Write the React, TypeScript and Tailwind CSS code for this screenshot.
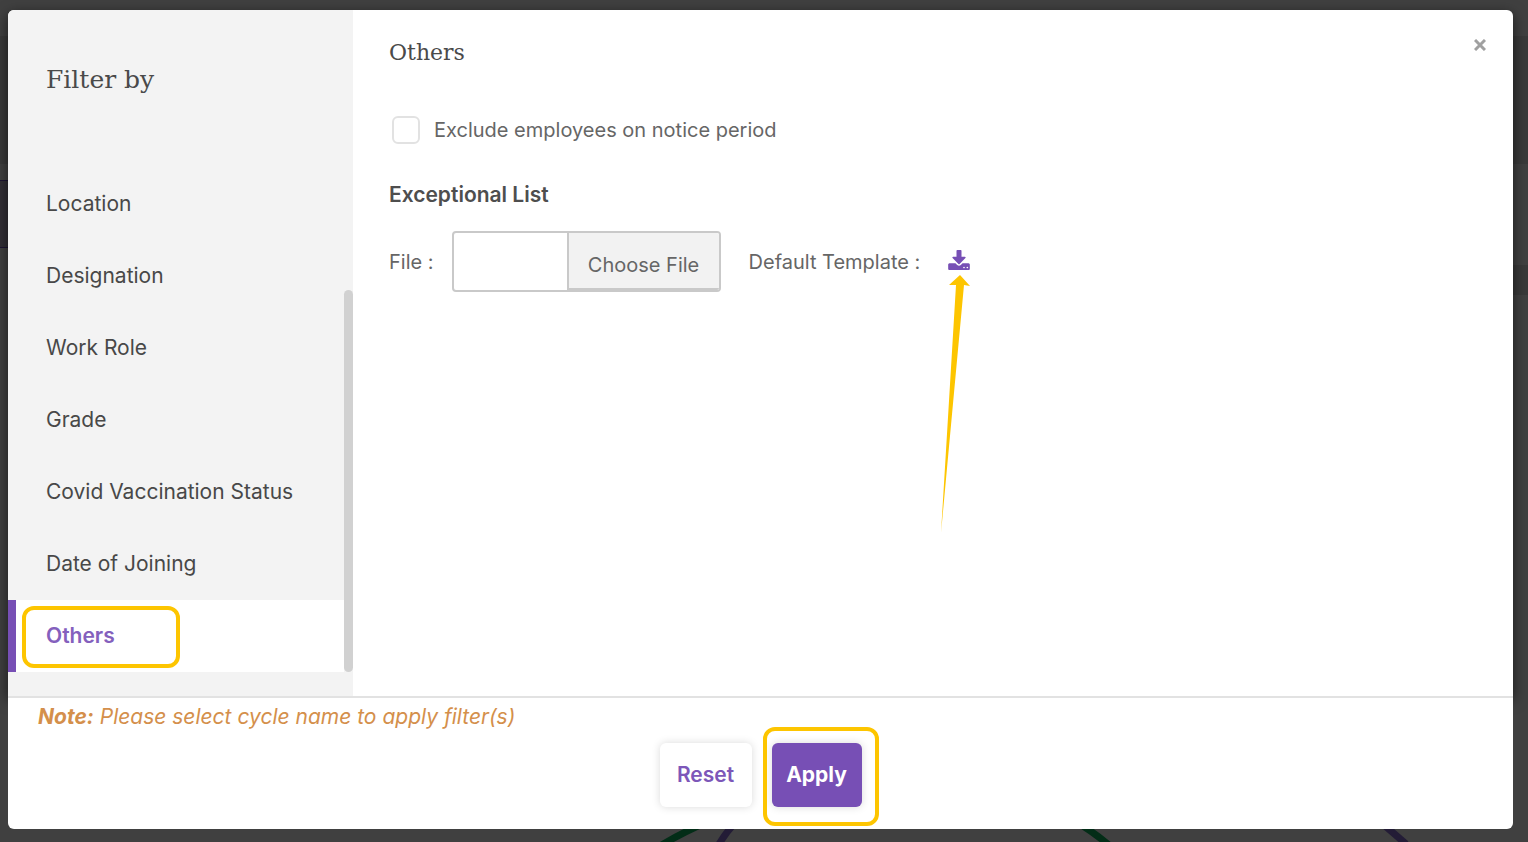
import { useState } from "react";

const filters = [
  "Location",
  "Designation",
  "Work Role",
  "Grade",
  "Covid Vaccination Status",
  "Date of Joining",
  "Others",
];

function DownloadIcon() {
  return (
    <svg viewBox="0 0 1664 1536" className="w-[22px] h-5" fill="currentColor">
      <path d="M1280 1344q0-26-19-45t-45-19-45 19-19 45 19 45 45 19 45-19 19-45zm256 0q0-26-19-45t-45-19-45 19-19 45 19 45 45 19 45-19 19-45zm128-224v320q0 40-28 68t-68 28h-1472q-40 0-68-28t-28-68v-320q0-40 28-68t68-28h465l135 136q58 56 136 56t136-56l136-136h464q40 0 68 28t28 68zm-325-569q17 41-14 70l-448 448q-18 19-45 19t-45-19l-448-448q-31-29-14-70 17-39 59-39h256v-448q0-26 19-45t45-19h256q26 0 45 19t19 45v448h256q42 0 59 39z" />
    </svg>
  );
}

// dimmed page that sits behind the dialog
function Backdrop() {
  return (
    <div className="absolute inset-0 overflow-hidden" aria-hidden="true">
      <div className="absolute inset-x-0 top-9 h-32 bg-[#3a3a3a]" />
      <div className="absolute left-0 top-[180px] w-24 h-[68px] bg-[#322f36] border-y border-[#1d1433]" />
      <div className="absolute right-0 top-[265px] w-24 h-[30px] bg-[#393939]" />
      <svg
        className="absolute left-0 bottom-0 w-full h-4"
        viewBox="0 0 1528 16"
        preserveAspectRatio="none"
        fill="none"
        strokeWidth="7"
      >
        <path d="M660 20Q678 9 702 -2" stroke="#032d17" />
        <path d="M718 20Q724 9 734 -2" stroke="#231c36" />
        <path d="M1080 -2Q1096 8 1110 20" stroke="#032d17" />
        <path d="M1383 -2L1406 18" stroke="#231c36" />
      </svg>
    </div>
  );
}

export default function App() {
  const [active, setActive] = useState("Others");

  return (
    <div className="relative min-h-screen flex flex-col bg-[#404040] pt-[10px] pb-[13px] pl-2 pr-[15px] font-['Inter','Liberation_Sans',sans-serif] text-[20px] leading-6 text-[#666666]">
      <Backdrop />
      <div
        role="dialog"
        aria-labelledby="filter-title"
        className="relative flex-1 flex flex-col"
      >
        <div className="flex-1 flex bg-white rounded-t-md shadow-[0_4px_14px_rgba(0,0,0,0.6)]">
          <aside className="w-[345px] shrink-0 bg-[#f3f3f3] rounded-tl-md flex flex-col pb-6 text-[21px]">
            <h2
              id="filter-title"
              className="h-[158px] pt-[54px] pl-[38px] font-['DejaVu_Serif',serif] text-[25px] leading-8 text-[#4a4a4a]"
            >
              Filter by
            </h2>
            <div className="flex">
              <nav className="flex-1 flex flex-col">
                {filters.map((name) => (
                  <button
                    key={name}
                    type="button"
                    onClick={() => setActive(name)}
                    className={
                      name === active
                        ? "relative h-[72px] pl-[30px] border-l-8 border-[#774fb5] bg-white text-left font-semibold text-[#8460bd]"
                        : "h-[72px] pl-[38px] text-left text-[#484848]"
                    }
                  >
                    {name}
                    {name === "Others" && (
                      <span className="absolute left-[6px] top-[6px] w-[158px] h-[62px] rounded-[12px] border-4 border-[#fdc500]" />
                    )}
                  </button>
                ))}
              </nav>
              <div className="w-[9px] flex flex-col justify-end">
                <div className="h-[382px] rounded-full bg-[#d1d1d1]" />
              </div>
            </div>
          </aside>

          <section className="flex-1 pl-9 pr-6 pt-[27px]">
            <div className="flex justify-between items-start">
              <h3 className="font-['DejaVu_Serif',serif] text-[22px] leading-8 text-[#4a4a4a]">
                Others
              </h3>
              <button type="button" aria-label="Close" className="p-[3px] pt-0.5">
                <svg
                  viewBox="0 0 12 12"
                  className="size-3"
                  fill="none"
                  stroke="#a0a0a0"
                  strokeWidth="3"
                >
                  <path d="M1 1L11 11M11 1L1 11" />
                </svg>
              </button>
            </div>

            <label className="mt-[47px] flex items-center gap-[14px] pl-[3px] h-7">
              <input
                type="checkbox"
                className="appearance-none size-7 rounded-md border-2 border-[#e2e2e2] bg-white checked:bg-[#774fb5]"
              />
              Exclude employees on notice period
            </label>

            <h4 className="mt-[39px] text-[21px] font-semibold text-[#4e4e4e]">
              Exceptional List
            </h4>

            <div className="mt-6 flex items-center">
              <label htmlFor="list-file">File :</label>
              <div className="relative ml-[18px] flex w-[269px] h-[61px] rounded border-2 border-[#c9c9c9] bg-white overflow-hidden">
                <div className="flex-1" />
                <label
                  htmlFor="list-file"
                  className="w-[152px] pt-2 border-l-2 border-b-2 border-[#c9c9c9] bg-[#f2f2f2] flex items-center justify-center"
                >
                  Choose File
                </label>
                <input id="list-file" type="file" className="sr-only" />
              </div>
              <span className="ml-7">Default Template :</span>
              <a
                href="#template"
                aria-label="Download default template"
                className="relative ml-7 mb-1 text-[#774fb5]"
              >
                <DownloadIcon />
                <svg
                  viewBox="0 0 30 258"
                  className="absolute -left-2 top-[25px] w-[30px] h-[258px] max-w-none"
                  fill="#fdc500"
                >
                  <path d="M20 0L30 11L24 10L1 258L16 10L9 10Z" />
                </svg>
              </a>
            </div>
          </section>
        </div>

        <footer className="relative h-[133px] bg-white rounded-b-md border-t-2 border-[#e2e2e2] pt-[7px] text-[21px]">
          <p className="pl-[30px] italic text-[#d48f4b]">
            <strong className="font-bold">Note:</strong> Please select cycle
            name to apply filter(s)
          </p>
          <div className="mt-[14px] flex justify-center gap-5 font-semibold">
            <button
              type="button"
              className="w-[92px] h-16 rounded-md bg-white shadow-[0_0_8px_rgba(0,0,0,0.15)] text-[#7d57b9]"
            >
              Reset
            </button>
            <button
              type="button"
              className="relative w-[90px] h-16 rounded-md bg-[#774fb5] shadow-[0_0_8px_rgba(0,0,0,0.15)] font-bold text-white"
            >
              Apply
              <span className="absolute -left-[9px] -top-4 w-[116px] h-[99px] rounded-[12px] border-4 border-[#fdc500]" />
            </button>
          </div>
        </footer>
      </div>
    </div>
  );
}
